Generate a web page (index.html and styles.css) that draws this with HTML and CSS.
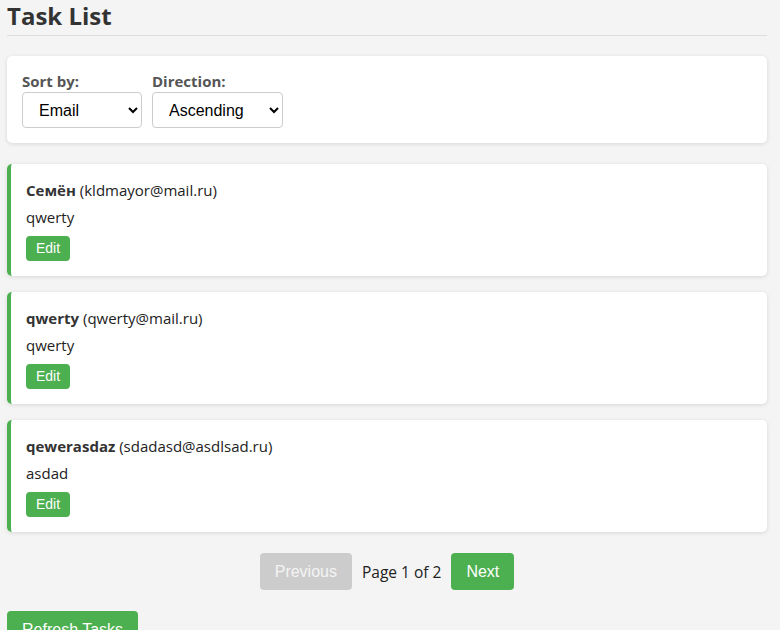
FILE: index.html
```html
<!DOCTYPE html>
<html lang="en">
<head>
<meta charset="utf-8">
<title>Task List</title>
<link rel="stylesheet" href="styles.css">
</head>
<body>
<div class="page">
  <h2 class="title">Task List</h2>
  <div class="panel filters">
    <div class="field">
      <label class="field-label">Sort by:</label>
      <select class="select select-sort">
        <option>Email</option>
      </select>
    </div>
    <div class="field">
      <label class="field-label">Direction:</label>
      <select class="select select-dir">
        <option>Ascending</option>
      </select>
    </div>
  </div>

  <div class="panel task">
    <div class="task-head"><strong>Семён</strong> (kldmayor@mail.ru)</div>
    <div class="task-text">qwerty</div>
    <button class="btn btn-small">Edit</button>
  </div>
  <div class="panel task">
    <div class="task-head"><strong>qwerty</strong> (qwerty@mail.ru)</div>
    <div class="task-text">qwerty</div>
    <button class="btn btn-small">Edit</button>
  </div>
  <div class="panel task">
    <div class="task-head"><strong>qewerasdaz</strong> (sdadasd@asdlsad.ru)</div>
    <div class="task-text">asdad</div>
    <button class="btn btn-small">Edit</button>
  </div>

  <div class="pager">
    <button class="btn btn-disabled">Previous</button>
    <span class="pager-info">Page 1 of 2</span>
    <button class="btn">Next</button>
  </div>

  <button class="btn refresh">Refresh Tasks</button>
</div>
</body>
</html>
```

FILE: styles.css
```css
html, body {
  margin: 0;
  padding: 0;
  background: #f4f4f4;
}
body {
  font-family: "Open Sans", "Noto Sans", sans-serif;
  color: #222;
}
.page {
  width: 760px;
  margin-left: 7px;
}
.title {
  margin: 0 0 20px 0;
  font-size: 24px;
  line-height: 32px;
  font-weight: 700;
  color: #333;
  padding-bottom: 3px;
  border-bottom: 1px solid #ddd;
}
.panel {
  background: #fff;
  border-radius: 5px;
  box-shadow: 0 1px 4px rgba(0,0,0,0.12);
  padding: 15px;
}
.filters {
  display: flex;
  gap: 10px;
  margin-bottom: 21px;
}
.field {
  display: flex;
  flex-direction: column;
}
.field-label {
  font-weight: 700;
  font-size: 15px;
  line-height: 21px;
  color: #555;
}
.select {
  font-family: "Liberation Sans", Arial, sans-serif;
  font-size: 16px;
  height: 36px;
  padding: 0 6px 0 12px;
  border: 1px solid #ccc;
  border-radius: 4px;
  background: #fff;
  color: #000;
}
.select-sort { width: 120px; }
.select-dir { width: 131px; }
.task {
  border-left: 4px solid #4caf50;
  margin-bottom: 16px;
}
.task-head {
  font-size: 15px;
  line-height: 22px;
  margin-bottom: 5px;
}
.task-head strong { color: #333; }
.task-text {
  font-size: 15px;
  line-height: 22px;
  margin-bottom: 8px;
}
.btn {
  font-family: "Liberation Sans", Arial, sans-serif;
  font-size: 16px;
  line-height: 17px;
  height: 37px;
  padding: 0 15px;
  background: #4caf50;
  color: #fff;
  border: none;
  border-radius: 4px;
  cursor: pointer;
}
.btn-small {
  font-size: 14px;
  line-height: 17px;
  height: 25px;
  padding: 0 10px;
  display: block;
}
.btn-disabled {
  background: #ccc;
  color: #f4f4f4;
}
.pager {
  display: flex;
  justify-content: center;
  align-items: center;
  gap: 10px;
  margin-top: 21px;
  margin-bottom: 21px;
}
.pager-info {
  font-size: 15.5px;
  color: #222;
}
.refresh {
  display: block;
}
```
